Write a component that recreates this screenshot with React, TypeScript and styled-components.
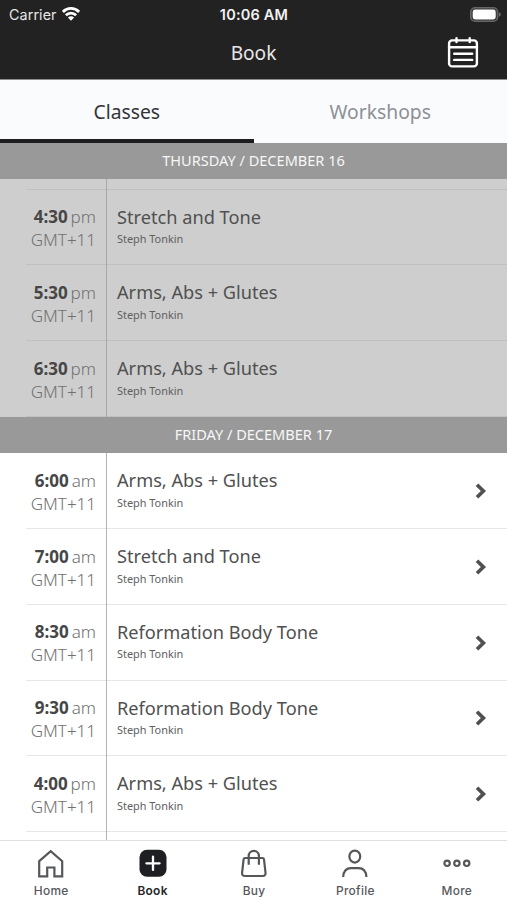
import React from "react";
import styled, { createGlobalStyle } from "styled-components";

const Global = createGlobalStyle`
  *, *::before, *::after { box-sizing: border-box; }
  html, body { margin: 0; padding: 0; }
  body { font-family: "Noto Sans", "Open Sans", sans-serif; background: #fff; overflow: hidden; }
`;

const Screen = styled.div`
  width: 507px;
  height: 900px;
  display: flex;
  flex-direction: column;
  overflow: hidden;
  background: #fff;
`;

const StatusBar = styled.div`
  flex: none;
  height: 27px;
  display: grid;
  grid-template-columns: 1fr auto 1fr;
  align-items: center;
  padding: 0 6px 0 9px;
  background: #222;
  color: #fff;
  font-family: Inter, sans-serif;
`;

const Carrier = styled.div`
  display: flex;
  align-items: center;
  gap: 5px;
  font-size: 14.3px;
  line-height: 27px;
  letter-spacing: 0.1px;
  color: #e6e6e6;
`;

const Clock = styled.div`
  margin-left: -2px;
  padding-top: 1px;
  font-size: 14.5px;
  line-height: 27px;
  font-weight: 600;
  letter-spacing: 0.2px;
  color: #f2f2f2;
`;

const BatterySlot = styled.div`
  display: flex;
  justify-content: flex-end;
`;

const Header = styled.header`
  flex: none;
  height: 53px;
  display: grid;
  grid-template-columns: 1fr auto 1fr;
  align-items: center;
  padding: 0 28px;
  background: #222;
  border-bottom: 1px solid #8c8d8e;
`;

const HeaderTitle = styled.h1`
  grid-column: 2;
  margin: 0;
  font-size: 19.1px;
  line-height: 52px;
  font-weight: 400;
  color: #e8e8e8;
`;

const CalendarButton = styled.button`
  justify-self: end;
  display: flex;
  padding: 0;
  border: 0;
  background: none;
`;

const Tabs = styled.div`
  flex: none;
  height: 62.6px;
  display: grid;
  grid-template-columns: 1fr 1fr;
  background: #f9fbfd;
`;

const Tab = styled.button<{ $active?: boolean }>`
  border: 0;
  border-bottom: 4px solid ${(p) => (p.$active ? "#1d1d20" : "transparent")};
  background: none;
  padding: 5px 0 0;
  font-family: inherit;
  font-size: 19.3px;
  line-height: 53px;
  color: ${(p) => (p.$active ? "#333437" : "#8d9095")};
`;

const Schedule = styled.main`
  flex: 1;
  min-height: 0;
  overflow: hidden;
`;

const DayBand = styled.div`
  height: 36.5px;
  display: flex;
  align-items: center;
  justify-content: center;
  padding-bottom: 1.5px;
  background: #999;
  color: #f7f7f7;
  font-size: 14.55px;
  line-height: 35px;
`;

const Day = styled.div<{ $past?: boolean }>`
  background: ${(p) => (p.$past ? "#cecece" : "#fff")};
  --rule: ${(p) => (p.$past ? "#c0c0c0" : "#e6e6e6")};
  --divider: ${(p) => (p.$past ? "#a8a8a8" : "#b4b4b4")};
`;

const Row = styled.div<{ $height?: number }>`
  height: ${(p) => p.$height ?? 75.75}px;
  margin-left: 26px;
  display: grid;
  grid-template-columns: 81px 1fr auto;
  border-bottom: 1px solid var(--rule);
`;

const DividedCell = styled.div`
  margin-bottom: -1px;
  border-right: 1px solid var(--divider);
`;

const TimeCell = styled(DividedCell)`
  padding: 15.5px 10px 0 0;
  text-align: right;
  font-size: 17px;
  line-height: 23px;
  font-weight: 300;
  color: #707070;
  white-space: nowrap;
`;

const Time = styled.div`
  display: flex;
  justify-content: flex-end;
  gap: 3px;
`;

const Hour = styled.span`
  font-weight: 700;
  color: #464646;
`;

const ClassCell = styled.div`
  padding: 16px 0 0 10px;
`;

const ClassName = styled.div`
  font-size: 18.2px;
  line-height: 23px;
  color: #505050;
`;

const Teacher = styled.div`
  margin-top: 0.5px;
  font-size: 10.9px;
  line-height: 20px;
  color: #606060;
`;

const Arrow = styled.div`
  display: flex;
  align-items: center;
  padding: 1px 20px 0 0;
`;

const TabBar = styled.nav`
  flex: none;
  height: 60px;
  display: grid;
  grid-template-columns: repeat(5, 1fr);
  border-top: 1px solid #e0e0e0;
  background: #fff;
`;

const NavItem = styled.button<{ $active?: boolean }>`
  display: flex;
  flex-direction: column;
  align-items: center;
  gap: 4px;
  padding: 8px 0 0 1px;
  border: 0;
  background: none;
  font-family: Inter, sans-serif;
  font-size: 11.9px;
  line-height: 18px;
  letter-spacing: 0.3px;
  font-weight: ${(p) => (p.$active ? 600 : 500)};
  color: ${(p) => (p.$active ? "#25262a" : "#56585c")};
`;

const WifiIcon = () => (
  <svg width="18" height="14" viewBox="0 0 18 14" fill="none" stroke="#fff" strokeWidth="2.8">
    <path d="M.9 4.9C5.5.3 12.5.3 17.1 4.9" />
    <path d="M3.9 8.2C6.8 5.3 11.2 5.3 14.1 8.2" />
    <path d="M9 13.8 5.9 10.6Q9 8 12.1 10.6Z" fill="#fff" stroke="none" />
  </svg>
);

const BatteryIcon = () => (
  <svg width="31" height="15" viewBox="0 0 31 15">
    <rect x=".8" y=".8" width="26.8" height="13.4" rx="4.3" fill="#333" stroke="#666" strokeWidth="1.6" />
    <rect x="2.7" y="2.6" width="23" height="9.8" rx="2.4" fill="#fff" />
    <path d="M29 5.2Q30.8 6.1 30.8 7.5T29 9.8Z" fill="#6d6d6d" />
  </svg>
);

const CalendarIcon = () => (
  <svg width="32" height="32" viewBox="0 0 32 32" fill="none" stroke="#fff" strokeWidth="2.4" strokeLinecap="round">
    <rect x="2.1" y="3.4" width="27.8" height="26" rx="3" />
    <path d="M2 10.3h28M9.5 1.3v3.8M22.7 1.3v3.8M7.2 16.7h18M7.2 22.9h18" />
  </svg>
);

const Chevron = () => (
  <svg width="12" height="16" viewBox="0 0 12 16" fill="none" stroke="#505050" strokeWidth="3.7">
    <path d="M2 1.7 8.4 8 2 14.3" />
  </svg>
);

const navIcons: Record<string, React.ReactNode> = {
  Home: <path d="M2.2 12.2 13.7 2.2 25.2 12.2V27.4H17.4V18.5H10.2V27.4H2.2Z" />,
  Book: (
    <>
      <rect x=".5" y=".8" width="27" height="27" rx="7.5" fill="#1e1f23" stroke="none" />
      <path d="M7.4 14.3h13.2M14 7.7v13.2" stroke="#fff" strokeWidth="2.3" strokeLinecap="round" />
    </>
  ),
  Buy: (
    <>
      <path d="M5 9h17.6q1.2 0 1.4 1.3l1.5 13.3q.3 3.4-2.8 3.4H4.9q-3.1 0-2.8-3.4l1.5-13.3Q3.8 9 5 9Z" />
      <path d="M8.7 15.8V6.9a5.1 5.1 0 0 1 10.2 0v8.9" />
    </>
  ),
  Profile: (
    <>
      <ellipse cx="13.8" cy="7.6" rx="5.4" ry="6" />
      <path d="M2.2 28Q2.7 19.2 10 19.2h7.6q7.3 0 7.8 8.8" />
    </>
  ),
  More: (
    <>
      <circle cx="4.1" cy="14.3" r="2.7" />
      <circle cx="13.9" cy="14.3" r="2.7" />
      <circle cx="23.7" cy="14.3" r="2.7" />
    </>
  ),
};

type Session = { hour: string; period: string; name: string };

const thursday: Session[] = [
  { hour: "4:30", period: "pm", name: "Stretch and Tone" },
  { hour: "5:30", period: "pm", name: "Arms, Abs + Glutes" },
  { hour: "6:30", period: "pm", name: "Arms, Abs + Glutes" },
];

const friday: Session[] = [
  { hour: "6:00", period: "am", name: "Arms, Abs + Glutes" },
  { hour: "7:00", period: "am", name: "Stretch and Tone" },
  { hour: "8:30", period: "am", name: "Reformation Body Tone" },
  { hour: "9:30", period: "am", name: "Reformation Body Tone" },
  { hour: "4:00", period: "pm", name: "Arms, Abs + Glutes" },
];

const SessionRow = ({ session, bookable }: { session: Session; bookable?: boolean }) => (
  <Row>
    <TimeCell>
      <Time>
        <Hour>{session.hour}</Hour>
        <span>{session.period}</span>
      </Time>
      <div>GMT+11</div>
    </TimeCell>
    <ClassCell>
      <ClassName>{session.name}</ClassName>
      <Teacher>Steph Tonkin</Teacher>
    </ClassCell>
    {bookable && (
      <Arrow>
        <Chevron />
      </Arrow>
    )}
  </Row>
);

export default function App() {
  return (
    <>
      <Global />
      <Screen>
        <StatusBar>
          <Carrier>
            Carrier <WifiIcon />
          </Carrier>
          <Clock>10:06 AM</Clock>
          <BatterySlot>
            <BatteryIcon />
          </BatterySlot>
        </StatusBar>
        <Header>
          <HeaderTitle>Book</HeaderTitle>
          <CalendarButton aria-label="Calendar">
            <CalendarIcon />
          </CalendarButton>
        </Header>
        <Tabs>
          <Tab $active>Classes</Tab>
          <Tab>Workshops</Tab>
        </Tabs>
        <Schedule>
          <DayBand>THURSDAY / DECEMBER 16</DayBand>
          <Day $past>
            <Row $height={10.5}>
              <DividedCell />
            </Row>
            {thursday.map((s) => (
              <SessionRow key={s.hour} session={s} />
            ))}
          </Day>
          <DayBand>FRIDAY / DECEMBER 17</DayBand>
          <Day>
            {friday.map((s) => (
              <SessionRow key={s.hour} session={s} bookable />
            ))}
            <Row>
              <DividedCell />
            </Row>
          </Day>
        </Schedule>
        <TabBar>
          {Object.keys(navIcons).map((label) => (
            <NavItem key={label} $active={label === "Book"}>
              <svg width="28" height="29" viewBox="0 0 28 29" fill="none" stroke="#55575b" strokeWidth="2.2">
                {navIcons[label]}
              </svg>
              {label}
            </NavItem>
          ))}
        </TabBar>
      </Screen>
    </>
  );
}
